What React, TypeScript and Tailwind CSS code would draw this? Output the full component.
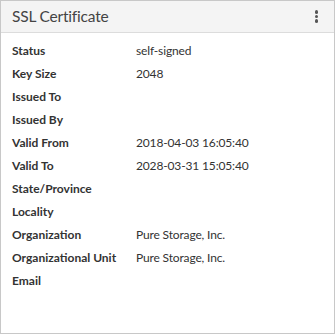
const rows: [string, string][] = [
  ["Status", "self-signed"],
  ["Key Size", "2048"],
  ["Issued To", ""],
  ["Issued By", ""],
  ["Valid From", "2018-04-03 16:05:40"],
  ["Valid To", "2028-03-31 15:05:40"],
  ["State/Province", ""],
  ["Locality", ""],
  ["Organization", "Pure Storage, Inc."],
  ["Organizational Unit", "Pure Storage, Inc."],
  ["Email", ""],
];

export default function App() {
  return (
    <div
      className="w-[335px] h-[334px] border border-[#c8c8c8] bg-white text-[#333] flex flex-col"
      style={{ fontFamily: "Lato, 'Liberation Sans', sans-serif" }}
    >
      <div className="h-[32px] shrink-0 bg-[#f4f4f4] border-b border-[#dcdcdc] flex items-center justify-between pl-[11px] pr-[16px]">
        <span className="text-[15.5px] tracking-[-0.2px] text-[#444]">SSL Certificate</span>
        <div className="flex flex-col gap-[1px]">
          <span className="w-[3.5px] h-[3.5px] rounded-full bg-[#555]" />
          <span className="w-[3.5px] h-[3.5px] rounded-full bg-[#555]" />
          <span className="w-[3.5px] h-[3.5px] rounded-full bg-[#555]" />
        </div>
      </div>
      <div className="pt-[6px] pl-[11px]">
        {rows.map(([k, v]) => (
          <div key={k} className="h-[23px] flex items-center text-[12px]">
            <span className="w-[124px] font-bold text-[#333]">{k}</span>
            <span className="text-[#333] tracking-[-0.15px]">{v}</span>
          </div>
        ))}
      </div>
    </div>
  );
}
